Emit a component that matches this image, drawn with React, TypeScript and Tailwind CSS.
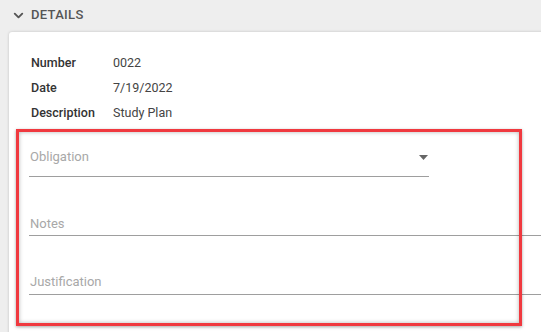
import { ChevronDown } from "lucide-react";

export default function App() {
  const details = [
    { label: "Number", value: "0022" },
    { label: "Date", value: "7/19/2022" },
    { label: "Description", value: "Study Plan" },
  ];

  return (
    <div
      className="relative w-[541px] h-[332px] overflow-hidden bg-[#eeeeee]"
      style={{ fontFamily: "Roboto, 'Noto Sans', sans-serif" }}
    >
      <div className="flex items-center h-[30px] pl-[11px] gap-[5px] text-[#555555]">
        <ChevronDown className="w-[15px] h-[15px]" strokeWidth={3} />
        <span className="text-[13px] font-medium tracking-[0.3px]">DETAILS</span>
      </div>

      <div className="ml-[9px] mt-[2px] w-[560px] h-[320px] bg-white rounded-tl-[3px] shadow-[0_0_3px_rgba(0,0,0,0.2)] pt-[21px] pl-[20px]">
        <div className="flex flex-col pl-[2px] gap-[6px] text-[12.5px] leading-[19px]">
          {details.map((d) => (
            <div key={d.label} className="flex">
              <span className="w-[82px] font-medium text-[#333333]">{d.label}</span>
              <span className="text-[#444444]">{d.value}</span>
            </div>
          ))}
        </div>

        <div className="mt-[17px] w-[400px] relative border-b border-[#9e9e9e] h-[38px]">
          <span className="absolute left-[1px] top-[8px] text-[13px] text-[#a8a8a8]">Obligation</span>
          <svg className="absolute right-[1px] top-[16px]" width="9" height="5" viewBox="0 0 9 5">
            <path d="M0 0 L9 0 L4.5 5 Z" fill="#666666" />
          </svg>
        </div>

        <div className="mt-[34px] relative border-b border-[#9e9e9e] h-[25px]">
          <span className="absolute left-[1px] top-[3px] text-[13px] text-[#a8a8a8]">Notes</span>
        </div>

        <div className="mt-[32px] relative border-b border-[#9e9e9e] h-[27px]">
          <span className="absolute left-[1px] top-[4px] text-[13px] text-[#a8a8a8]">Justification</span>
        </div>
      </div>

      <div className="absolute left-[16px] top-[129px] w-[506px] h-[197px] border-[3px] border-[#f0393f] shadow-[0_1px_3px_rgba(0,0,0,0.35),inset_0_0_4px_rgba(0,0,0,0.3)]" />
    </div>
  );
}
